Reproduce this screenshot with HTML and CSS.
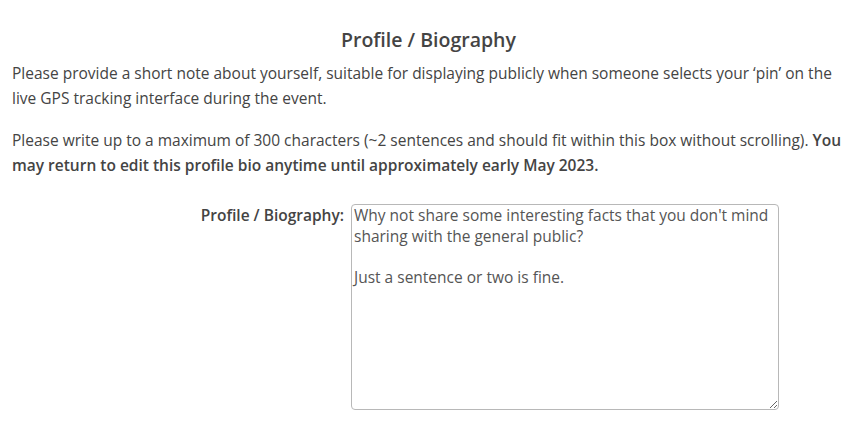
FILE: index.html
```html
<!DOCTYPE html>
<html>
<head>
<meta charset="utf-8">
<link rel="stylesheet" href="styles.css">
</head>
<body>
<div class="page">
  <h2 class="title">Profile / Biography</h2>
  <p class="note">Please provide a short note about yourself, suitable for displaying publicly when someone selects your ‘pin’ on the live GPS tracking interface during the event.</p>
  <p class="note">Please write up to a maximum of 300 characters (~2 sentences and should fit within this box without scrolling). <b>You may return to edit this profile bio anytime until approximately early May 2023.</b></p>
  <div class="field">
    <label class="label" for="bio">Profile / Biography:</label>
    <textarea class="bio" id="bio">Why not share some interesting facts that you don't mind sharing with the general public?

Just a sentence or two is fine.</textarea>
  </div>
</div>
</body>
</html>
```
FILE: styles.css
```css
html, body {
  margin: 0;
  padding: 0;
  background: #fff;
}
body {
  font-family: "Open Sans", "Noto Sans", sans-serif;
  color: #444;
}
.page {
  padding: 0 12px;
}
.title {
  margin: 0;
  padding-top: 27px;
  text-align: center;
  font-size: 19.5px;
  line-height: 26px;
  font-weight: 600;
  color: #444;
}
.note {
  margin: 8px 0 0;
  font-size: 15.5px;
  line-height: 25px;
}
.note + .note {
  margin-top: 17px;
}
.note b {
  font-weight: 600;
}
.field {
  display: grid;
  grid-template-columns: 332px 428px;
  column-gap: 7px;
  margin-top: 26px;
}
.label {
  text-align: right;
  font-size: 15.5px;
  font-weight: 600;
  line-height: 22px;
}
.bio {
  box-sizing: border-box;
  width: 428px;
  height: 206px;
  margin: 0;
  padding: 0 2px;
  border: 1px solid #b8b8b8;
  border-radius: 4px;
  font-family: "Open Sans", "Noto Sans", sans-serif;
  font-size: 15.5px;
  line-height: 20.7px;
  color: #555;
  resize: vertical;
}
```
